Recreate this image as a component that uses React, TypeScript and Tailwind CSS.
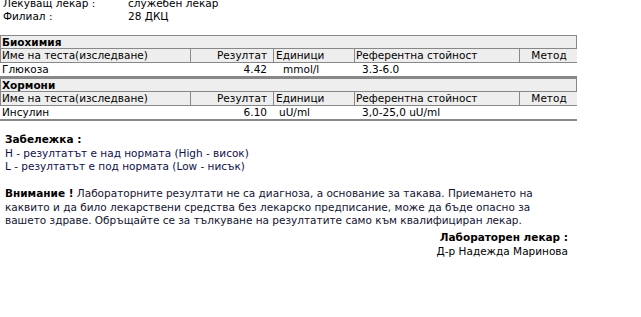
import React from "react";

const F = "font-['Tahoma','DejaVu_Sans',sans-serif]";

function Section({ title, name, result, unit, unitPad, ref: refVal }: { title: string; name: string; result: string; unit: string; unitPad: string; ref: string }) {
  return (
    <div>
      <div className="h-[13px] border-x border-t border-[#888] bg-[#eeeeee] pl-[1px] font-bold leading-[13px]">{title}</div>
      <div className="grid h-[15px] grid-cols-[189px_83px_81px_165px_59px] border-y border-l border-[#888] bg-[#eeeeee] leading-[13px]">
        <div className="pl-[1px]">Име на теста(изследване)</div>
        <div className="border-l border-[#888] pr-[6px] text-right">Резултат</div>
        <div className="border-l border-[#888] pl-[2px]">Единици</div>
        <div className="border-l border-[#888] pl-[1px]">Референтна стойност</div>
        <div className="border-l border-[#888] text-center">Метод</div>
      </div>
      <div className="grid h-[15px] grid-cols-[189px_83px_81px_165px_59px] border-b-2 border-[#888] bg-white leading-[13px]">
        <div className="pl-[2px]">{name}</div>
        <div className="pr-[5px] text-right">{result}</div>
        <div className={unitPad}>{unit}</div>
        <div className="pl-[9px]">{refVal}</div>
        <div></div>
      </div>
    </div>
  );
}

export default function App() {
  return (
    <div className={`${F} h-[317px] w-[641px] overflow-hidden bg-white text-[10.5px] text-black`}>
      <div className="-mt-[3px] pl-[3px] leading-[13px]">
        <div className="flex">
          <span className="w-[125px]">Лекуващ лекар :</span>
          <span>служебен лекар</span>
        </div>
        <div className="flex">
          <span className="w-[125px]">Филиал :</span>
          <span>28 ДКЦ</span>
        </div>
      </div>
      <div className="mt-[12px] w-[577px]">
        <Section title="Биохимия" name="Глюкоза" result="4.42" unit="mmol/l" unitPad="pl-[11px]" ref="3.3-6.0" />
        <Section title="Хормони" name="Инсулин" result="6.10" unit="uU/ml" unitPad="pl-[7px]" ref="3,0-25,0 uU/ml" />
      </div>
      <div className="mt-[12px] pl-[5px] leading-[13.5px]">
        <div className="font-bold">Забележка :</div>
        <div className="text-[#10104a]">Н - резултатът е над нормата (High - висок)</div>
        <div className="text-[#10104a]">L - резултатът е под нормата (Low - нисък)</div>
        <div className="h-[13.5px]"></div>
        <div className="text-[#141430]">
          <span className="font-bold text-black">Внимание !</span> Лабораторните резултати не са диагноза, а основание за такава. Приемането на
          <br />
          каквито и да било лекарствени средства без лекарско предписание, може да бъде опасно за
          <br />
          вашето здраве. Обръщайте се за тълкуване на резултатите само към квалифициран лекар.
        </div>
      </div>
      <div className="mt-[2px] w-[568px] text-right leading-[14px]">
        <div className="font-bold">Лабораторен лекар :</div>
        <div>Д-р Надежда Маринова</div>
      </div>
    </div>
  );
}
